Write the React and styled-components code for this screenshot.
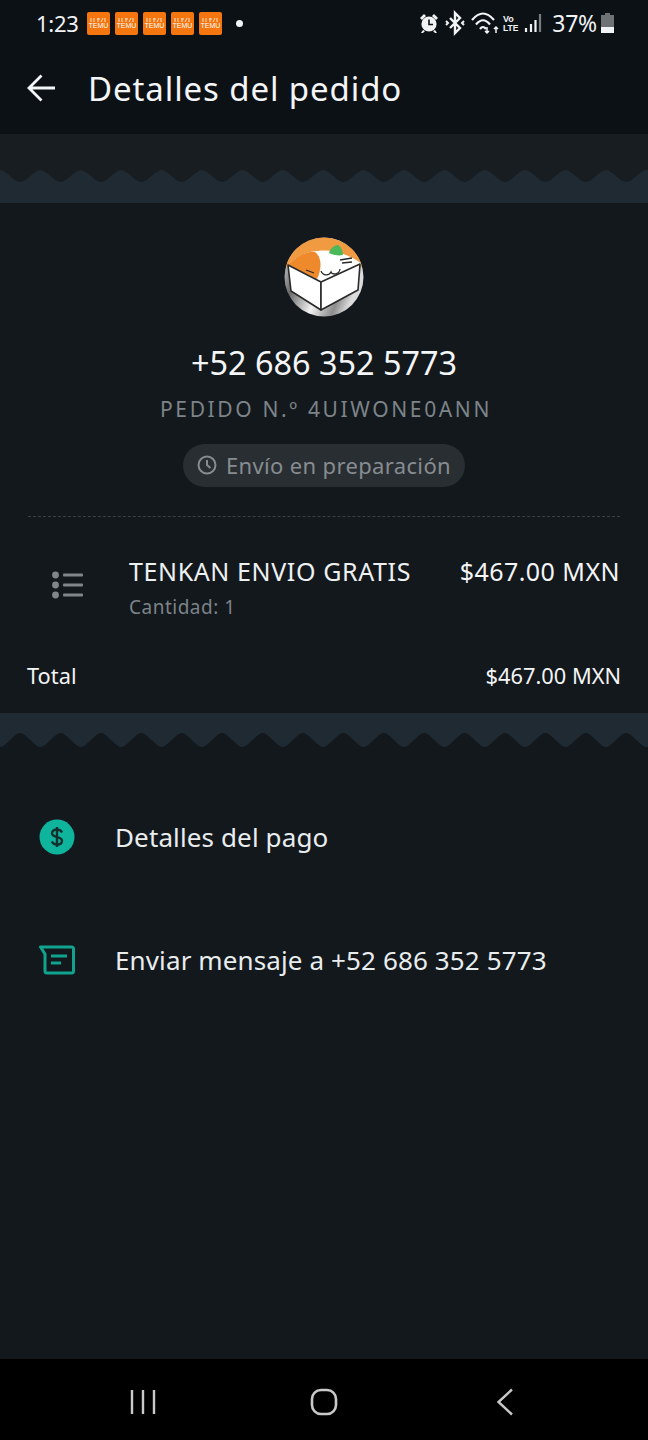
import styled, { createGlobalStyle } from "styled-components";

const GlobalStyle = createGlobalStyle`
  html, body { margin: 0; padding: 0; background: #13181d; }
  body { font-family: "Noto Sans", "Liberation Sans", sans-serif; }
`;

const Page = styled.div`
  width: 648px;
  height: 1440px;
  display: flex;
  flex-direction: column;
  background: #13181d;
  overflow: hidden;
`;

const TopArea = styled.div`
  height: 134px;
  background: #0c1116;
  flex-shrink: 0;
`;

const StatusBar = styled.div`
  height: 46px;
  padding: 0 34px 0 36px;
  display: flex;
  align-items: center;
  justify-content: space-between;
  color: #f1f3f4;
`;

const StatusGroup = styled.div`
  display: flex;
  align-items: center;
`;

const Clock = styled.span`
  font-size: 22px;
  width: 51px;
  letter-spacing: -0.3px;
`;

const Temu = styled.div`
  width: 23px;
  height: 23px;
  margin-right: 5px;
  border-radius: 2px;
  background: #f5760f;
  color: #fff;
  display: flex;
  flex-direction: column;
  align-items: center;
  justify-content: center;
  font-size: 7px;
  line-height: 7px;
  font-family: "Liberation Sans", sans-serif;
`;

const Dot = styled.i`
  width: 7px;
  height: 7px;
  margin-left: 9px;
  border-radius: 50%;
  background: #f1f3f4;
`;

const Battery = styled.span`
  font-size: 23px;
  margin: 0 4px 0 8px;
  letter-spacing: -0.2px;
`;

const HeaderRow = styled.div`
  height: 84px;
  display: flex;
  align-items: center;
  padding-left: 27px;
  gap: 33px;
  color: #f3f5f6;
`;

const HeaderTitle = styled.h1`
  margin: 0;
  font-size: 33px;
  font-weight: 400;
  line-height: 1;
  letter-spacing: 0.9px;
`;

const WaveSvg = styled.svg`
  display: block;
  flex-shrink: 0;
`;

const Summary = styled.section`
  padding: 34px 28px 0;
  height: 510px;
  box-sizing: border-box;
  flex-shrink: 0;
  display: flex;
  flex-direction: column;
  align-items: center;
`;

const Avatar = styled.svg`
  width: 80px;
  height: 80px;
  margin-bottom: 25px;
`;

const Phone = styled.div`
  font-size: 32.4px;
  line-height: 40px;
  color: #f3f5f6;
`;

const OrderNo = styled.div`
  margin-top: 13px;
  padding-left: 4px;
  font-size: 21px;
  line-height: 28px;
  letter-spacing: 2.63px;
  color: #7d8489;
`;

const StatusPill = styled.div`
  margin-top: 21px;
  height: 43px;
  width: 282px;
  box-sizing: border-box;
  padding-bottom: 2px;
  border-radius: 22px;
  background: #292e33;
  color: #868c90;
  font-size: 22px;
  letter-spacing: 0.35px;
  display: flex;
  align-items: center;
  justify-content: center;
  gap: 9px;
`;

const Divider = styled.div`
  align-self: stretch;
  margin-top: 29px;
  border-top: 1px dashed #3a4045;
`;

const ItemRow = styled.div`
  align-self: stretch;
  margin-top: 37px;
  display: grid;
  grid-template-columns: 101px 1fr auto;
  align-items: start;
`;

const ListIconBox = styled.div`
  padding: 17px 0 0 24px;
`;

const ItemName = styled.div`
  font-size: 25px;
  line-height: 34px;
  letter-spacing: 0.62px;
  color: #eef1f2;
`;

const ItemQty = styled.div`
  margin-top: 6px;
  font-size: 19px;
  line-height: 26px;
  letter-spacing: 0.5px;
  color: #7d8388;
`;

const ItemPrice = styled.div`
  font-size: 25px;
  line-height: 34px;
  letter-spacing: 0.45px;
  color: #f3f5f6;
`;

const TotalRow = styled.div`
  align-self: stretch;
  margin: 41px -1px 0 -1px;
  display: flex;
  justify-content: space-between;
  font-size: 21.8px;
  line-height: 30px;
  color: #f3f5f6;
`;

const Actions = styled.nav`
  flex: 1;
  padding-top: 68px;
  display: flex;
  flex-direction: column;
  gap: 79px;
`;

const ActionRow = styled.div`
  height: 44px;
  display: flex;
  align-items: center;
  color: #e9edee;
  font-size: 26px;
  letter-spacing: 0.12px;
`;

const ActionIcon = styled.div`
  width: 115px;
  padding-left: 39px;
  box-sizing: border-box;
  display: flex;
`;

const NavBar = styled.div`
  height: 81px;
  box-sizing: border-box;
  flex-shrink: 0;
  background: #000;
  padding-top: 4px;
  display: grid;
  grid-template-columns: repeat(3, 181px);
  justify-content: center;
  justify-items: center;
  align-items: center;
`;

// the notification badge repeats five times
const TemuBadge = () => (
  <Temu>
    <svg width="17" height="4" viewBox="0 0 17 4">
      <path d="M1 0v4M4 0v4M7 1h3M8 0v4M13 0l-2 4M15 0v4" stroke="#ffe3c8" strokeWidth="1" />
    </svg>
    <span>TEMU</span>
  </Temu>
);

const wavePath = (a, b) => {
  let d = `M-40.4 0 L-40.4 ${a}`;
  for (let i = -1; i < 17; i++) {
    const x = i * 40.4;
    d += ` C${x + 6} ${a} ${x + 14.2} ${b} ${x + 20.2} ${b} C${x + 26.2} ${b} ${x + 34.4} ${a} ${x + 40.4} ${a}`;
  }
  return d + ` L${17 * 40.4} 0 Z`;
};

const TopWave = () => (
  <WaveSvg width="648" height="69" viewBox="0 0 648 69">
    <rect width="648" height="69" fill="#1f2a33" />
    <path d={wavePath(36, 48)} fill="#181d22" />
  </WaveSvg>
);

const BottomWave = () => (
  <WaveSvg width="648" height="34" viewBox="0 0 648 34">
    <path d={wavePath(34, 20)} fill="#1f2a33" />
  </WaveSvg>
);

const App = () => (
  <Page>
    <GlobalStyle />
    <TopArea>
      <StatusBar>
        <StatusGroup>
          <Clock>1:23</Clock>
          <TemuBadge />
          <TemuBadge />
          <TemuBadge />
          <TemuBadge />
          <TemuBadge />
          <Dot />
        </StatusGroup>
        <StatusGroup>
          <svg width="130" height="26" viewBox="0 0 130 26">
            <g fill="#f1f3f4">
              <circle cx="15" cy="14" r="7.6" />
              <path d="M6 8l4-4 2 2-4 4zM24 8l-4-4-2 2 4 4zM9 20l-2 3 2 0 2-2zM21 20l2 3-2 0-2-2z" />
            </g>
            <path d="M15 9.500v5h4" stroke="#0c1116" strokeWidth="1.6" fill="none" />
            <path d="M36 8l10 10-5 5V3l5 5-10 10" stroke="#f1f3f4" strokeWidth="2.4" fill="none" />
            <path d="M32 11l2 2-2 2M50 11l-2 2 2 2" stroke="#f1f3f4" strokeWidth="2" fill="none" />
            <path d="M58 10Q69-3 80 10M62 14.500Q69 6 76 14.500M66 19Q69 15 72 19" stroke="#f1f3f4" strokeWidth="2.2" fill="none" />
            <path d="M73 17v6m-2-2l2 2 2-2M82 23v-6m-2 2l2-2 2 2" stroke="#f1f3f4" strokeWidth="1.5" fill="none" />
            <text x="89" y="12" fill="#f1f3f4" fontSize="9" fontFamily="Liberation Sans" fontWeight="700">Vo</text>
            <text x="89" y="21" fill="#f1f3f4" fontSize="8.500" fontFamily="Liberation Sans" fontWeight="700">LTE</text>
            <path d="M112 22v-4M117 22v-8M121.500 22v-12" stroke="#f1f3f4" strokeWidth="2.2" />
            <path d="M126 22V4" stroke="#777c80" strokeWidth="2.2" />
          </svg>
          <Battery>37%</Battery>
          <svg width="13" height="20" viewBox="0 0 13 20">
            <path d="M4 0h5v2h4v18H0V2h4z" fill="#6e7275" />
            <path d="M0 14h13v6H0z" fill="#f1f3f4" />
          </svg>
        </StatusGroup>
      </StatusBar>
      <HeaderRow>
        <svg width="28" height="28" viewBox="0 0 28 28" fill="none" stroke="#f3f5f6" strokeWidth="2.8">
          <path d="M2 14h26M14.500 1.500L2 14l12.500 12.500" />
        </svg>
        <HeaderTitle>Detalles del pedido</HeaderTitle>
      </HeaderRow>
    </TopArea>

    <TopWave />

    <Summary>
      <Avatar viewBox="0 0 80 80">
        <defs>
          <linearGradient id="rim" x1="0" y1="0" x2="1" y2="0.4">
            <stop offset="0" stopColor="#f0f0f0" />
            <stop offset="0.3" stopColor="#6a6a6a" />
            <stop offset="0.6" stopColor="#f2f2f2" />
            <stop offset="0.85" stopColor="#8c8c8c" />
            <stop offset="1" stopColor="#dcdcdc" />
          </linearGradient>
          <clipPath id="disc">
            <circle cx="40" cy="40" r="39.5" />
          </clipPath>
        </defs>
        <circle cx="40" cy="40" r="39.5" fill="url(#rim)" />
        <g clipPath="url(#disc)">
          <path d="M0 0h80v30H0z" fill="#f09a42" />
          <path d="M4 28C14 18 24 14 34 14c16-2 32 4 44 13L37 47z" fill="#fff" />
          <path d="M4 28C14 18 24 14 31 15c7 5 7 17 2 27z" fill="#ee8a2c" />
          <path d="M4 28l33 17v28L7 54z" fill="#fff" stroke="#2a2a2a" strokeWidth="1.6" strokeLinejoin="round" />
          <path d="M37 45l39-18-2 26-37 20z" fill="#fff" stroke="#2a2a2a" strokeWidth="1.6" strokeLinejoin="round" />
          <path d="M22 33l8 3M37 34c2 5 8 5 10 1 1 3 8 3 9-3M56 23l12-2M58 26l10-1" stroke="#2a2a2a" strokeWidth="1.3" fill="none" />
          <path d="M45 16c1-5 6-8 9-8 3 2 5 6 5 10-5 1-10 0-14-2z" fill="#4cb85a" />
        </g>
      </Avatar>
      <Phone>+52 686 352 5773</Phone>
      <OrderNo>PEDIDO N.º 4UIWONE0ANN</OrderNo>
      <StatusPill>
        <svg width="20" height="20" viewBox="0 0 20 20" fill="none" stroke="#868c90" strokeWidth="2">
          <circle cx="10" cy="10" r="8.5" />
          <path d="M10 5v5l3.500 3" />
        </svg>
        Envío en preparación
      </StatusPill>
      <Divider />
      <ItemRow>
        <ListIconBox>
          <svg width="31" height="28" viewBox="0 0 31 28" fill="#80868a">
            <circle cx="3.500" cy="4" r="3.400" />
            <circle cx="3.500" cy="14" r="3.400" />
            <circle cx="3.500" cy="24" r="3.400" />
            <rect x="11" y="2.400" width="20" height="3.200" rx="1" />
            <rect x="11" y="12.400" width="20" height="3.200" rx="1" />
            <rect x="11" y="22.400" width="20" height="3.200" rx="1" />
          </svg>
        </ListIconBox>
        <div>
          <ItemName>TENKAN ENVIO GRATIS</ItemName>
          <ItemQty>Cantidad: 1</ItemQty>
        </div>
        <ItemPrice>$467.00 MXN</ItemPrice>
      </ItemRow>
      <TotalRow>
        <span>Total</span>
        <span>$467.00 MXN</span>
      </TotalRow>
    </Summary>

    <BottomWave />

    <Actions>
      <ActionRow>
        <ActionIcon>
          <svg width="36" height="36" viewBox="0 0 36 36">
            <circle cx="18" cy="18" r="17.500" fill="#0eb49c" />
            <path d="M23 13.500c-1-2-3-3-5-3-3 0-5 1.500-5 3.800 0 5 10 2.500 10 7.400 0 2.300-2 3.800-5 3.800-2.200 0-4.200-1-5.200-3M18 8v20" stroke="#13302e" strokeWidth="2.400" fill="none" />
          </svg>
        </ActionIcon>
        Detalles del pago
      </ActionRow>
      <ActionRow>
        <ActionIcon>
          <svg width="36" height="30" viewBox="0 0 36 30" fill="none" stroke="#10a48f" strokeWidth="3" strokeLinejoin="round">
            <path d="M1.500 2h31a2 2 0 0 1 2 2v22a2 2 0 0 1-2 2H8a2 2 0 0 1-2-2V9z" />
            <path d="M12 11h16M12 18h10" />
          </svg>
        </ActionIcon>
        Enviar mensaje a +52 686 352 5773
      </ActionRow>
    </Actions>

    <NavBar>
      <svg width="28" height="26" viewBox="0 0 28 26" stroke="#c9c9c9" strokeWidth="2.400">
        <path d="M3 1v24M14 1v24M25 1v24" />
      </svg>
      <svg width="28" height="28" viewBox="0 0 28 28" fill="none" stroke="#c9c9c9" strokeWidth="2.600">
        <rect x="2" y="2" width="24" height="24" rx="9" />
      </svg>
      <svg width="18" height="28" viewBox="0 0 18 28" fill="none" stroke="#c9c9c9" strokeWidth="2.400">
        <path d="M16 1.500L2.500 14 16 26.500" />
      </svg>
    </NavBar>
  </Page>
);

export default App;
